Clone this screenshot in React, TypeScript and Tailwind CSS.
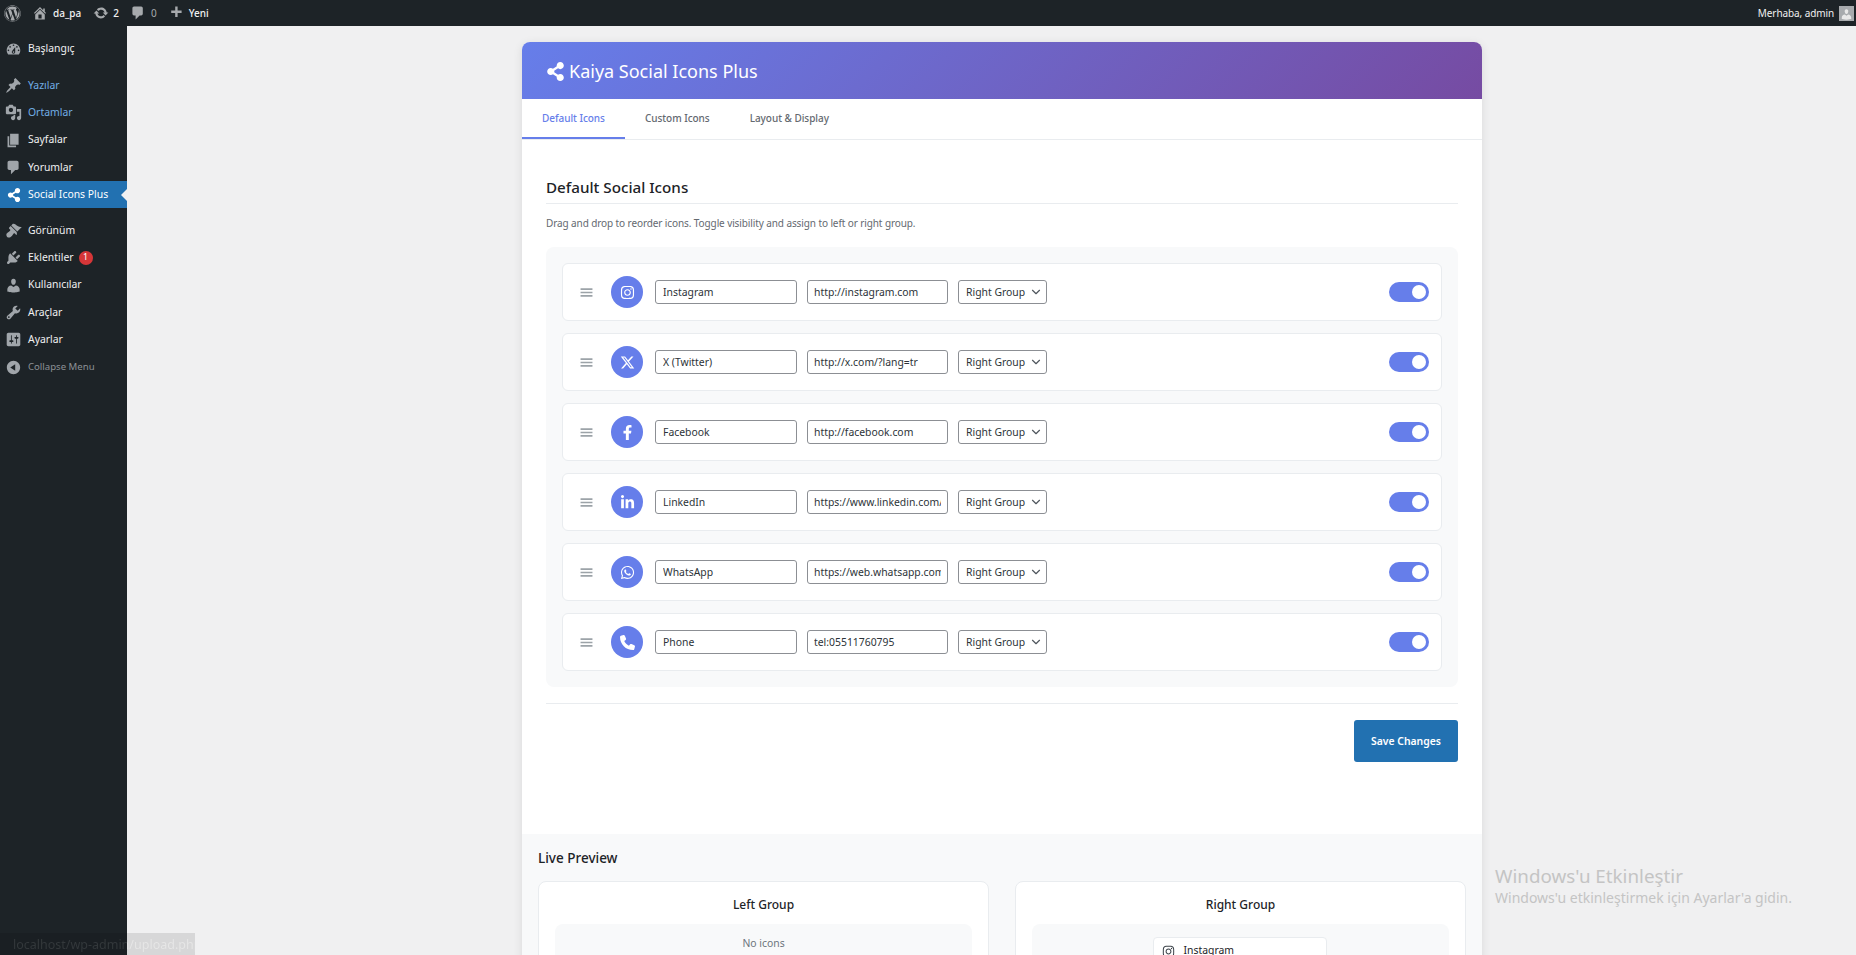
import React from 'react';
import { FaWordpress, FaShareAlt, FaInstagram, FaFacebookF, FaLinkedinIn, FaWhatsapp } from 'react-icons/fa';
import { FaXTwitter, FaPhone } from 'react-icons/fa6';
import { ChevronDown } from 'lucide-react';

// dashicons, 20x20 grid
const dash = {
  dashboard: 'M3.76 16h12.48c1.1-1.37 1.76-3.11 1.76-5 0-4.42-3.58-8-8-8s-8 3.58-8 8c0 1.89.66 3.63 1.76 5zM10 4c.55 0 1 .45 1 1s-.45 1-1 1-1-.45-1-1 .45-1 1-1zM6 6c.55 0 1 .45 1 1s-.45 1-1 1-1-.45-1-1 .45-1 1-1zm8 0c.55 0 1 .45 1 1s-.45 1-1 1-1-.45-1-1 .45-1 1-1zm-5.37 5.55L12 7v6c0 1.1-.9 2-2 2s-2-.9-2-2c0-.57.24-1.08.63-1.45zM4 10c.55 0 1 .45 1 1s-.45 1-1 1-1-.45-1-1 .45-1 1-1zm12 0c.55 0 1 .45 1 1s-.45 1-1 1-1-.45-1-1 .45-1 1-1zm-5 3c0-.55-.45-1-1-1s-1 .45-1 1 .45 1 1 1 1-.45 1-1z',
  post: 'M10.44 3.02l1.82-1.82 6.36 6.35-1.83 1.82c-1.05-.68-2.48-.57-3.41.36l-.75.75c-.92.93-1.04 2.35-.35 3.41l-1.83 1.82-2.41-2.41-2.8 2.79c-.42.42-3.38 2.71-3.8 2.29s1.86-3.39 2.28-3.81l2.79-2.79L4.1 9.36l1.83-1.82c1.05.69 2.48.57 3.4-.36l.75-.75c.93-.92 1.05-2.35.36-3.41z',
  media: 'M13 11V4c0-.55-.45-1-1-1h-1.67L9 1H5L3.67 3H2c-.55 0-1 .45-1 1v7c0 .55.45 1 1 1h10c.55 0 1-.45 1-1zM7 4.5c1.38 0 2.5 1.12 2.5 2.5S8.38 9.5 7 9.5 4.5 8.38 4.5 7 5.62 4.5 7 4.5zM14 6h5v10.5c0 1.38-1.12 2.5-2.5 2.5S14 17.88 14 16.5s1.12-2.5 2.5-2.5c.17 0 .34.02.5.05V9h-3V6zm-4 8.05V13h2v3.5c0 1.38-1.12 2.5-2.5 2.5S7 17.88 7 16.5 8.12 14 9.5 14c.17 0 .34.02.5.05z',
  page: 'M6 15V2h10v13H6zm-1 1h8v2H3V5h2v11z',
  comment: 'M5 2h9c1.1 0 2 .9 2 2v7c0 1.1-.9 2-2 2h-2l-5 5v-5H5c-1.1 0-2-.9-2-2V4c0-1.1.9-2 2-2z',
  appearance: 'M14.48 11.06L7.41 3.99l1.5-1.5c.5-.56 2.3-.47 3.51.32 1.21.8 1.43 1.28 2.91 2.1 1.18.64 2.45 1.26 4.45.85zm-.71.71L6.7 4.7 4.93 6.47c-.39.39-.39 1.02 0 1.41l1.06 1.06c.39.39.39 1.03 0 1.42-.6.6-1.43 1.11-2.21 1.69-.35.26-.7.53-1.01.84C1.43 13.23 1.1 15.5 2.5 17.5c2 1.4 3.83.63 5.17-.7.31-.31.58-.66.84-1.01.58-.78 1.09-1.61 1.69-2.21.39-.39 1.02-.39 1.41 0l1.06 1.06c.39.39 1.02.39 1.41 0z',
  plugin: 'M13.11 4.36L9.87 7.6 8 5.73l3.24-3.24c.35-.34 1.05-.2 1.56.32.52.51.66 1.21.31 1.55zm-8 1.77l.91-1.12 9.01 9.01-1.19.84c-.71.71-2.63 1.16-3.82 1.16H6.14L4.9 17.26c-.59.59-1.54.59-2.12 0-.59-.58-.59-1.53 0-2.12l1.24-1.24v-3.88c0-1.13.4-3.19 1.09-3.89zm7.26 3.97l3.24-3.24c.34-.35 1.04-.21 1.55.31.52.51.66 1.21.31 1.55l-3.24 3.25z',
  users: 'M10 9.25c-2.27 0-2.73-3.44-2.73-3.44C7 4.02 7.82 2 9.97 2c2.16 0 2.98 2.02 2.71 3.81 0 0-.41 3.44-2.68 3.44zm0 2.57L12.72 10c2.39 0 4.52 2.33 4.52 4.53v2.49s-3.65 1.13-7.24 1.13c-3.65 0-7.24-1.13-7.24-1.13v-2.49c0-2.25 1.94-4.48 4.47-4.48z',
  tools: 'M16.68 9.77c-1.34 1.34-3.3 1.67-4.95.99l-5.41 6.52c-.99.99-2.59.99-3.58 0s-.99-2.59 0-3.57l6.52-5.42c-.68-1.65-.35-3.61.99-4.95 1.28-1.28 3.12-1.62 4.72-1.06l-2.89 2.89 2.82 2.82 2.86-2.87c.53 1.58.18 3.39-1.08 4.67zM3.81 16.21c.4.39 1.04.39 1.43 0 .4-.4.4-1.04 0-1.43-.39-.4-1.03-.4-1.43 0-.39.39-.39 1.03 0 1.43z',
  settings: 'M18 16V4c0-1.1-.9-2-2-2H4c-1.1 0-2 .9-2 2v12c0 1.1.9 2 2 2h12c1.1 0 2-.9 2-2zM8 11h1c.55 0 1 .45 1 1s-.45 1-1 1H8v1.5c0 .28-.22.5-.5.5s-.5-.22-.5-.5V13H6c-.55 0-1-.45-1-1s.45-1 1-1h1V5.5c0-.28.22-.5.5-.5s.5.22.5.5V11zm5-2h-1c-.55 0-1-.45-1-1s.45-1 1-1h1V5.5c0-.28.22-.5.5-.5s.5.22.5.5V7h1c.55 0 1 .45 1 1s-.45 1-1 1h-1v5.5c0 .28-.22.5-.5.5s-.5-.22-.5-.5V9z',
  collapse: 'M10 2.16c4.33 0 7.84 3.51 7.84 7.84s-3.51 7.84-7.84 7.84S2.16 14.33 2.16 10 5.71 2.16 10 2.16zm2 11.72V6.12L6.18 9.97z',
  home: 'M16 8.5l1.53 1.53-1.06 1.06L10 4.62l-6.47 6.47-1.06-1.06L10 2.5l4 4v-2h2v4zm-6-2.46l6 5.99V18H4v-5.97zM12 17v-5H8v5h4z',
  update: 'M10.2 3.28c3.53 0 6.43 2.61 6.92 6h2.08l-3.5 4-3.5-4h2.32c-.45-1.97-2.21-3.45-4.32-3.45-1.45 0-2.73.71-3.54 1.78L4.95 5.66C6.23 4.2 8.11 3.28 10.2 3.28zm-.4 13.44c-3.52 0-6.43-2.61-6.92-6H.8l3.5-4c1.17 1.33 2.33 2.67 3.5 4H5.48c.45 1.97 2.21 3.45 4.32 3.45 1.45 0 2.73-.71 3.54-1.78l1.71 1.95c-1.28 1.46-3.15 2.38-5.25 2.38z',
  plus: 'M17 7v3h-5v5H9v-5H4V7h5V2h3v5h5z',
  menu: 'M17 7V5H3v2h14zm0 4V9H3v2h14zm0 4v-2H3v2h14z',
};

function Dash({ d, className }: { d: string; className: string }) {
  return (
    <svg viewBox="0 0 20 20" fill="currentColor" className={className}>
      <path d={d} />
    </svg>
  );
}

const menuTop = [
  { icon: dash.post, label: 'Yazılar', blue: true },
  { icon: dash.media, label: 'Ortamlar', blue: true },
  { icon: dash.page, label: 'Sayfalar' },
  { icon: dash.comment, label: 'Yorumlar' },
];

const menuBottom = [
  { icon: dash.appearance, label: 'Görünüm' },
  { icon: dash.plugin, label: 'Eklentiler', badge: '1' },
  { icon: dash.users, label: 'Kullanıcılar' },
  { icon: dash.tools, label: 'Araçlar' },
  { icon: dash.settings, label: 'Ayarlar' },
];

const socials = [
  { icon: FaInstagram, name: 'Instagram', url: 'http://instagram.com' },
  { icon: FaXTwitter, name: 'X (Twitter)', url: 'http://x.com/?lang=tr' },
  { icon: FaFacebookF, name: 'Facebook', url: 'http://facebook.com' },
  { icon: FaLinkedinIn, name: 'LinkedIn', url: 'https://www.linkedin.com/in/kaiya' },
  { icon: FaWhatsapp, name: 'WhatsApp', url: 'https://web.whatsapp.com/send' },
  { icon: FaPhone, name: 'Phone', url: 'tel:05511760795' },
];

function MenuItem({ icon, label, blue, badge }: { icon: string; label: string; blue?: boolean; badge?: string }) {
  return (
    <div className="flex h-[27.3px] items-center">
      <Dash d={icon} className="ml-[5px] h-[17px] w-[17px] text-[#a0a5aa]" />
      <span className={`ml-[6px] text-[10.4px] ${blue ? 'text-[#72aee6]' : 'text-[#f0f0f1]'}`}>{label}</span>
      {badge && (
        <span className="ml-[5px] flex h-[14px] w-[14px] items-center justify-center rounded-full bg-[#d63638] text-[8.8px] text-white">
          {badge}
        </span>
      )}
    </div>
  );
}

function SocialRow({ icon: Icon, name, url }: { icon: React.ComponentType<{ className?: string }>; name: string; url: string }) {
  return (
    <div className="flex h-[58px] items-center rounded-md border border-[#e9ecef] bg-white pl-[15px] pr-3">
      <Dash d={dash.menu} className="h-[17px] w-[17px] text-[#9ca3a8]" />
      <div className="ml-4 flex h-8 w-8 items-center justify-center rounded-full bg-[#667eea] text-white">
        <Icon className="h-[15px] w-[15px]" />
      </div>
      <input
        readOnly
        value={name}
        className="ml-3 h-6 w-[142px] rounded-[3px] border border-[#8c8f94] bg-white px-[7px] text-[10.4px] text-[#2c3338] outline-none"
      />
      <input
        readOnly
        value={url}
        className="ml-[10px] h-6 w-[141px] rounded-[3px] border border-[#8c8f94] bg-white px-[6px] text-[10.4px] text-[#2c3338] outline-none"
      />
      <div className="relative ml-[10px] h-6 w-[89px]">
        <select className="block h-6 w-full appearance-none rounded-[3px] border border-[#8c8f94] bg-white pl-[7px] pt-[1px] text-[10.4px] text-[#2c3338] outline-none">
          <option>Right Group</option>
          <option>Left Group</option>
        </select>
        <ChevronDown className="absolute right-[4.5px] top-[5px] h-[14px] w-[14px] text-[#50575e]" strokeWidth={2} />
      </div>
      <div className="ml-auto flex h-5 w-10 items-center justify-end rounded-full bg-[#667eea] pr-[3px]">
        <div className="h-[14px] w-[14px] rounded-full bg-white" />
      </div>
    </div>
  );
}

export default function App() {
  return (
    <div className="relative flex h-[955px] w-[1856px] flex-col overflow-hidden bg-[#f0f0f1] font-['Noto_Sans',sans-serif]">
      {/* admin bar */}
      <header className="flex h-[26px] shrink-0 items-center bg-[#1d2327] text-[10px] text-[#f0f0f1]">
        <FaWordpress className="ml-1 h-[17px] w-[17px] text-[#a7aaad]" />
        <Dash d={dash.home} className="ml-[11px] h-4 w-4 text-[#a7aaad]" />
        <span className="ml-[5px] font-medium">da_pa</span>
        <Dash d={dash.update} className="ml-[12px] h-4 w-4 text-[#a7aaad]" />
        <span className="ml-[4px] font-medium">2</span>
        <Dash d={dash.comment} className="ml-[11px] h-4 w-4 text-[#a7aaad]" />
        <span className="ml-[5px] text-[#a7aaad]">0</span>
        <Dash d={dash.plus} className="ml-[11px] h-4 w-4 text-[#a7aaad]" />
        <span className="ml-[5px] font-medium">Yeni</span>
        <span className="ml-auto tracking-[-0.1px]">Merhaba, admin</span>
        <div className="ml-[5px] mr-[2px] flex h-[15px] w-[15px] items-end justify-center overflow-hidden bg-[#a7aaad]">
          <Dash d={dash.users} className="h-[13px] w-[13px] text-[#e8e8e8]" />
        </div>
      </header>

      <div className="flex min-h-0 flex-1">
        {/* sidebar */}
        <aside className="w-[127px] shrink-0 bg-[#1d2327] pt-[9.6px]">
          <MenuItem icon={dash.dashboard} label="Başlangıç" />
          <div className="h-[9px]" />
          {menuTop.map((item) => (
            <MenuItem key={item.label} {...item} />
          ))}
          <div className="relative flex h-[27.3px] items-center bg-[#2271b1] text-white">
            <FaShareAlt className="ml-[7px] h-[14px] w-[14px]" />
            <span className="ml-[7px] text-[10.4px]">Social Icons Plus</span>
            <div className="absolute right-0 top-[7.5px] h-0 w-0 border-y-[6px] border-r-[6px] border-y-transparent border-r-[#f0f0f1]" />
          </div>
          <div className="h-[8.6px]" />
          {menuBottom.map((item) => (
            <MenuItem key={item.label} {...item} />
          ))}
          <div className="flex h-[27.3px] items-center">
            <Dash d={dash.collapse} className="ml-[5px] h-[17px] w-[17px] text-[#a0a5aa]" />
            <span className="ml-[6px] text-[9.6px] text-[#8c9196]">Collapse Menu</span>
          </div>
        </aside>

        {/* main column */}
        <main className="min-w-0 flex-1 pl-[395px] pt-4">
          <div className="w-[960px] rounded-lg bg-white shadow-[0_2px_10px_rgba(0,0,0,0.1)]">
            <div className="flex h-[57px] items-center rounded-t-lg bg-[linear-gradient(135deg,#667eea_0%,#764ba2_100%)] pl-6 text-white">
              <FaShareAlt className="mt-[2px] h-[19px] w-[19px]" />
              <h1 className="ml-[4px] pt-[2px] text-[18px]">Kaiya Social Icons Plus</h1>
            </div>

            <div className="flex h-[41px] border-b border-[#e9ecef] text-[10px] font-medium tracking-[-0.04px] text-[#646970]">
              <div className="flex h-10 items-center border-b-2 border-[#667eea] px-5 pt-[1px] text-[#667eea]">Default Icons</div>
              <div className="flex h-10 items-center px-5 pb-[1px]">Custom Icons</div>
              <div className="flex h-10 items-center px-5 pb-[1px]">Layout &amp; Display</div>
            </div>

            <div className="px-6 pt-[35px]">
              <h2 className="border-b border-[#e9ecef] pb-1 text-[15.2px] font-medium leading-6 text-[#1d2327]">Default Social Icons</h2>
              <p className="mt-3 text-[10px] leading-[14px] tracking-[-0.1px] text-[#646970]">
                Drag and drop to reorder icons. Toggle visibility and assign to left or right group.
              </p>
              <div className="mt-[17px] flex flex-col gap-3 rounded-lg bg-[#f8f9fa] p-4">
                {socials.map((s) => (
                  <SocialRow key={s.name} {...s} />
                ))}
              </div>
              <div className="mt-4 border-t border-[#e9ecef] pt-4 text-right">
                <button className="h-[42px] w-[104px] rounded-[3px] bg-[#2271b1] pt-[1px] text-[10.4px] font-semibold text-white">Save Changes</button>
              </div>
            </div>

            {/* live preview */}
            <div className="mt-[72px] rounded-b-lg bg-[#f8f9fa] px-4 pt-[15px]">
              <h3 className="text-[13.5px] font-medium leading-[18px] text-[#1d2327]">Live Preview</h3>
              <div className="mt-[14px] grid grid-cols-2 gap-[26px]">
                <div className="rounded-lg border border-[#e9ecef] bg-white px-4 pb-4 pt-[15px]">
                  <h4 className="text-center text-[12px] font-medium leading-[16px] text-[#1d2327]">Left Group</h4>
                  <div className="mt-[11px] rounded-lg bg-[#f8f9fa] pb-[14px] pt-3 text-center text-[10.4px] leading-[14px] text-[#6c757d]">No icons</div>
                </div>
                <div className="rounded-lg border border-[#e9ecef] bg-white px-4 pb-4 pt-[15px]">
                  <h4 className="text-center text-[12px] font-medium leading-[16px] text-[#1d2327]">Right Group</h4>
                  <div className="mt-[11px] rounded-lg bg-[#f8f9fa] pr-[2px] pt-[13px]">
                    <div className="mx-auto flex h-[28px] w-[174px] items-center rounded border border-[#e9ecef] bg-white pl-2 text-[10.4px] text-[#1d2327]">
                      <FaInstagram className="h-[13px] w-[13px] text-[#3c434a]" />
                      <span className="ml-[9px]">Instagram</span>
                    </div>
                  </div>
                </div>
              </div>
            </div>
          </div>
        </main>
      </div>

      {/* windows watermark */}
      <div className="absolute left-[1495px] top-[863px] text-[#c4c4c4]">
        <div className="text-[18.8px] leading-[26px]">Windows'u Etkinleştir</div>
        <div className="text-[14px] leading-[18px]">Windows'u etkinleştirmek için Ayarlar'a gidin.</div>
      </div>

      {/* browser status bubble */}
      <div className="absolute bottom-0 left-0 h-[22px] w-[195px] overflow-hidden bg-black/10 pl-[13px] text-[12.5px] leading-[23px]">
        <span className="whitespace-nowrap bg-[linear-gradient(90deg,#33383b_114px,#e6e6e6_114px)] bg-clip-text text-transparent">
          localhost/wp-admin/upload.php
        </span>
      </div>
    </div>
  );
}
